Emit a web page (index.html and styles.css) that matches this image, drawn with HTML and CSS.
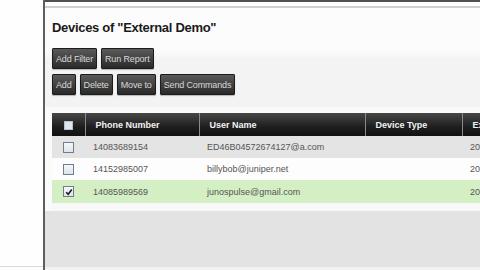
FILE: index.html
```html
<!DOCTYPE html>
<html>
<head>
<meta charset="utf-8">
<link rel="stylesheet" href="styles.css">
</head>
<body>
<div class="page">
  <div class="side"></div>
  <div class="vline"></div>
  <div class="main">
    <div class="topbar"></div>
    <div class="topgap"></div>
    <div class="topline"></div>
    <div class="content">
      <h1 class="title">Devices of "External Demo"</h1>
      <div class="btnrow">
        <span class="btn">Add Filter</span>
        <span class="btn">Run Report</span>
      </div>
      <div class="btnrow row2">
        <span class="btn">Add</span>
        <span class="btn">Delete</span>
        <span class="btn">Move to</span>
        <span class="btn">Send Commands</span>
      </div>
    </div>
    <div class="tablewrap">
      <table class="grid">
        <colgroup>
          <col class="c-cb"><col class="c-phone"><col class="c-user"><col class="c-type"><col class="c-date">
        </colgroup>
        <thead>
          <tr>
            <th class="cb"><span class="hbox"></span></th>
            <th>Phone Number</th>
            <th>User Name</th>
            <th>Device Type</th>
            <th>Expiry</th>
          </tr>
        </thead>
        <tbody>
          <tr class="odd">
            <td class="cb"><span class="box"></span></td>
            <td class="ph">14083689154</td>
            <td>ED46B04572674127@a.com</td>
            <td></td>
            <td>2011</td>
          </tr>
          <tr class="even">
            <td class="cb"><span class="box"></span></td>
            <td class="ph">14152985007</td>
            <td>billybob@juniper.net</td>
            <td></td>
            <td>2011</td>
          </tr>
          <tr class="sel">
            <td class="cb"><span class="box checked"><svg width="8" height="8" viewBox="0 0 8 8"><path d="M1.2 4.2 L3.2 6.2 L6.8 1.6" fill="none" stroke="#1a1a1a" stroke-width="1.6"/></svg></span></td>
            <td class="ph">14085989569</td>
            <td>junospulse@gmail.com</td>
            <td></td>
            <td>2011</td>
          </tr>
        </tbody>
      </table>
      <div class="tablefoot"></div>
    </div>
    <div class="bottomarea"></div>
  </div>
</div>
</body>
</html>
```

FILE: styles.css
```css
html, body {
  margin: 0;
  padding: 0;
  width: 480px;
  height: 270px;
  overflow: hidden;
  background: #fdfdfd;
  font-family: "Liberation Sans", Arial, sans-serif;
}
.page {
  display: flex;
  width: 480px;
  height: 270px;
}
.side {
  width: 43px;
  background: #fefefe;
  border-bottom: 1px solid #d8d8d8;
  box-sizing: border-box;
  height: 267px;
}
.vline {
  width: 2px;
  background: #5e5e5e;
}
.main {
  flex: 1;
  display: flex;
  flex-direction: column;
  overflow: hidden;
  background: linear-gradient(#fcfcfc 0, #fcfcfc 50px, #f3f3f3 60px, #f4f4f4 100%);
}
.topbar {
  height: 2px;
  background: #505050;
}
.topgap {
  height: 4px;
  background: #fefefe;
}
.topline {
  height: 2px;
  background: #cfcfcf;
}
.content {
  padding: 0 0 0 7px;
}
.title {
  margin: 12px 0 0 0;
  font-size: 13px;
  line-height: 16px;
  font-weight: bold;
  color: #1a1a1a;
  letter-spacing: -0.3px;
}
.btnrow {
  display: flex;
  gap: 4px;
  margin-top: 12px;
}
.row2 {
  margin-top: 5px;
}
.btn {
  display: inline-flex;
  align-items: center;
  height: 21px;
  padding: 0 3px;
  box-sizing: border-box;
  font-size: 9px;
  letter-spacing: -0.15px;
  color: #d8d8d8;
  background: linear-gradient(#5a5a5a, #2a2a2a);
  border: 1px solid #1c1c1c;
  border-radius: 1px;
  box-shadow: 0 1px 1px rgba(0,0,0,0.25);
  white-space: nowrap;
}
.tablewrap {
  margin-top: 12px;
  padding: 6px 0 0 7px;
  background: #fafafa;
}
.grid {
  border-collapse: collapse;
  table-layout: fixed;
  width: 480px;
  font-size: 9px;
}
.c-cb { width: 33px; }
.c-phone { width: 114px; }
.c-user { width: 166px; }
.c-type { width: 97px; }
.c-date { width: 70px; }
.grid th {
  height: 23px;
  padding: 0 0 0 10px;
  text-align: left;
  color: #f2f2f2;
  font-weight: bold;
  background: linear-gradient(#484848, #1e1e1e 60%, #111);
  border-left: 1px solid #8a8a8a;
  white-space: nowrap;
  overflow: hidden;
}
.grid th.cb {
  border-left: none;
  padding: 0;
  text-align: center;
}
.grid td {
  height: 22px;
  padding: 0 0 0 8px;
  color: #555;
  white-space: nowrap;
  overflow: hidden;
}
.grid td.cb {
  padding: 0;
  text-align: center;
}
.grid td.ph {
  padding-left: 8px;
}
.odd td { background: #e4e4e4; }
.even td { background: #fdfdfd; }
.sel td { background: #d3efc3; height: 23px; }
.hbox {
  display: inline-block;
  width: 9px;
  height: 9px;
  background: #e0e6ee;
  border: 1px solid #b8c0cc;
  box-sizing: border-box;
  vertical-align: middle;
}
.box {
  display: inline-flex;
  align-items: center;
  justify-content: center;
  width: 11px;
  height: 11px;
  box-sizing: border-box;
  border: 1px solid #6f7d8c;
  background: linear-gradient(#f6f8fa, #dde4ec);
  vertical-align: middle;
}
.tablefoot {
  height: 8px;
  background: #f8f8f8;
}
.bottomarea {
  flex: 1;
  background: #e3e3e3;
  border-bottom: 3px solid #f2f2f2;
}
```
